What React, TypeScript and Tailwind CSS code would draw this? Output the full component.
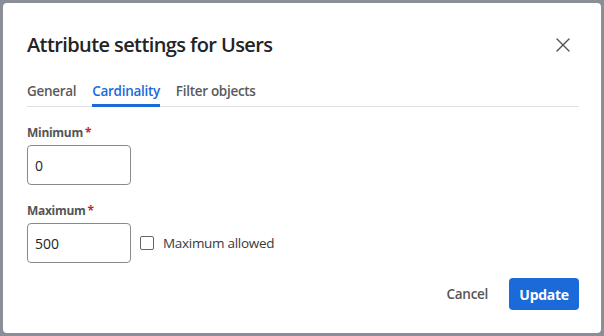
import { X } from "lucide-react";

export default function App() {
  return (
    <div
      className="w-[604px] h-[336px] bg-[#8a8f97] p-[3px]"
      style={{ fontFamily: '"Open Sans", "Noto Sans", sans-serif' }}
    >
      <div className="h-full w-full bg-white rounded-[4px] flex flex-col pl-6 pr-[22px] pt-[28px] pb-[23px] text-[#242424]">
        <header className="flex items-center justify-between">
          <h1 className="text-[20px] leading-[28px] font-semibold tracking-[-0.6px]">
            Attribute settings for Users
          </h1>
          <button type="button" className="mr-[4px] text-[#555]">
            <X className="w-6 h-6" strokeWidth={1.4} />
          </button>
        </header>

        <nav className="mt-[22px] flex gap-4 border-b border-[#e0e0e0] text-[13.5px] font-semibold tracking-[-0.3px]">
          <span className="pb-[5px] text-[#5a5a5a]">General</span>
          <span className="pb-[3px] text-[#1a6ad9] border-b-[3px] border-[#1a6ad9] -mb-[1px]">
            Cardinality
          </span>
          <span className="pb-[5px] text-[#5a5a5a]">Filter objects</span>
        </nav>

        <div className="mt-[18px] flex flex-col gap-[18px]">
          <div className="flex flex-col gap-[4px]">
            <label className="text-[12px] leading-[16px] font-bold text-[#555] tracking-[-0.3px]">
              Minimum<span className="text-[#c4262e] ml-[2px]">*</span>
            </label>
            <input
              defaultValue="0"
              className="w-[104px] h-[40px] border border-[#8a8a8a] rounded-[4px] px-[7px] text-[14px] text-[#242424] outline-none"
            />
          </div>
          <div className="flex flex-col gap-[4px]">
            <label className="text-[12px] leading-[16px] font-bold text-[#555] tracking-[-0.3px]">
              Maximum<span className="text-[#c4262e] ml-[2px]">*</span>
            </label>
            <div className="flex items-center gap-[9px]">
              <input
                defaultValue="500"
                className="w-[104px] h-[40px] border border-[#8a8a8a] rounded-[4px] px-[7px] text-[14px] text-[#242424] outline-none"
              />
              <label className="flex items-center gap-[9px] text-[13.5px] text-[#3a3a3a] tracking-[-0.3px]">
                <span className="w-[14px] h-[14px] border border-[#666] rounded-[2px] bg-white" />
                Maximum allowed
              </label>
            </div>
          </div>
        </div>

        <div className="mt-auto flex justify-end items-center gap-[21px]">
          <button type="button" className="text-[13.5px] font-semibold text-[#555] tracking-[-0.3px]">
            Cancel
          </button>
          <button
            type="button"
            className="w-[70px] h-[32px] rounded-[4px] bg-[#1a6ad9] text-white text-[14px] font-bold tracking-[-0.3px]"
          >
            Update
          </button>
        </div>
      </div>
    </div>
  );
}
